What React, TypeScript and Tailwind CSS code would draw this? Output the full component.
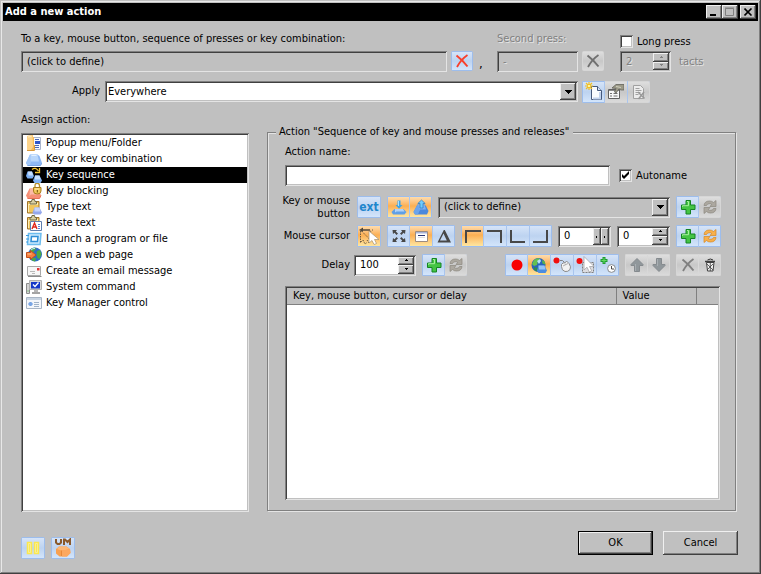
import { useState, type ReactNode } from 'react';
import clsx from 'clsx';

const sunken =
  'shadow-[inset_1px_1px_0_#808080,inset_-1px_-1px_0_#e4e4e4,inset_2px_2px_0_#404040,inset_-2px_-2px_0_#c0c0c0]';
const raised =
  'bg-[#c0c0c0] shadow-[inset_-1px_-1px_0_#404040,inset_1px_1px_0_#f0f0f0,inset_-2px_-2px_0_#808080]';
const etched = 'text-[#808080] [text-shadow:1px_1px_0_#e4e4e4]';

function Icon({ children }: { children: ReactNode }) {
  return (
    <svg width="16" height="16" viewBox="0 0 16 16" fill="none" className="block shrink-0" aria-hidden="true">
      {children}
    </svg>
  );
}

/* ---------- list icons ---------- */

const FolderIcon = () => (
  <Icon>
    <path d="M6.500 2.500h8v12h-8z" fill="#f4f8ff" stroke="#a8b4cc" />
    <path d="M9 4.500h4M9 10.500h4M9 12.500h4" stroke="#4a68b8" />
    <path d="M9 6h5v3H9z" fill="#2f55c8" />
    <path d="M1 1 7 0v2h1v13H1z" fill="#f6b955" />
    <path d="M1 1 6.500 0 7 12l-2 3H1z" fill="#fdd48a" />
    <path d="M2 2l3.500-.5" stroke="#fff0c8" />
    <path d="M8.500 10v5.500H1" stroke="#d8983a" />
  </Icon>
);
const KeyCapIcon = () => (
  <Icon>
    <path d="M4 3.500h7.500l2 1.500L16 12l-1.500 2.500H1.500L0 12z" fill="#8fb9f4" />
    <path d="M4.500 3.500h7l1.500 7H5L3.500 12z" fill="#b9d7fb" />
    <path d="M4 3.500 0 12l1.500 2.500H4l1-4z" fill="#a3c8f8" />
    <path d="M5.500 4.500h5" stroke="#e4f1ff" />
    <path d="M1.500 14.500h13L16 12" stroke="#79a5e6" />
  </Icon>
);
const SequenceIcon = () => (
  <Icon>
    <path d="M1.500 4.500H6L8 9l-1.500 2.500h-5L0 9z" fill="#7fb2f6" />
    <path d="M2 4.500h4l1 4H2.500z" fill="#c6dfff" />
    <path d="M9 8.500h4.500l2.500 5-1.500 2.500h-6L7 13.500z" fill="#7fb2f4" />
    <path d="M9 8.500h4.500l1 4H9z" fill="#c6dfff" />
    <path d="M6 2.500Q9.500-.5 12.500 4" stroke="#f4c430" strokeWidth="1.300" />
    <path d="M13.500 1v4.500H9" stroke="#f4c430" strokeWidth="1.300" />
  </Icon>
);
const BlockIcon = () => (
  <Icon>
    <path d="M3.500 5.500H11l2 2 2 5-1.500 3h-12L0 12.500z" fill="#f58f76" />
    <path d="M4 5.500h7l1 6H5L3.500 13z" fill="#fbb9a8" />
    <path d="M1.500 15.500h12l1.500-3" stroke="#e87058" />
    <path d="M9 5V2.500a2 2 0 0 1 4.500 0V5" stroke="#b8902c" strokeWidth="1.300" />
    <path d="M7.500 4.500h7.500V8q0 3-3.800 3-3.700 0-3.700-3z" fill="#f2c95c" stroke="#a87c1c" />
    <path d="M9 6h4" stroke="#fff0b8" />
    <path d="M11.300 7v2.500" stroke="#6b4a0c" />
  </Icon>
);
const Clipboard = () => (
  <>
    <path d="M1.500 2.500h11.500v11.500H1.500z" fill="#f2c65c" stroke="#a0742a" />
    <path d="M3 4h9v2H3z" fill="#fdeeb4" />
    <path d="M4 5V2.500h1.500L6 .5h2.500l.5 2h1.500V5z" fill="#d8d0a4" stroke="#706844" />
    <path d="M2.500 5v8" stroke="#fdeeb4" />
  </>
);
const TypeTextIcon = () => (
  <Icon>
    <Clipboard />
    <path d="M8.500 8.500h5l2.500 5-1.500 2H8l-1.500-2z" fill="#94a8ec" />
    <path d="M8.500 8.500h5l1 4h-6z" fill="#c6d3fb" />
  </Icon>
);
const PasteTextIcon = () => (
  <Icon>
    <Clipboard />
    <path d="M4.500 6.500h11v9h-11z" fill="#fff" stroke="#5f7fae" />
    <path d="m6 14 2.500-6 2.500 6M7 12h3" stroke="#e0281c" strokeWidth="1.400" />
    <path d="M12 9.500h2M12 11.500h2M12 13.500h2" stroke="#5a82d8" />
  </Icon>
);
const LaunchIcon = () => (
  <Icon>
    <path d="M2.500 2.500H15l-1 11H1.500z" fill="#cdeafc" stroke="#6cbcee" strokeWidth="1.500" />
    <path d="M5.500 5.500H12l-.5 5H5z" fill="#fff" stroke="#2f8fd6" strokeWidth="1.500" />
    <path d="M0 4.500h3M0 8h3M0 11h2" stroke="#3c9ce0" />
  </Icon>
);
const WebIcon = () => (
  <Icon>
    <circle cx="9" cy="7.500" r="7" fill="#2f6ec4" />
    <path d="M5 2c3-2 5-1 5 0L8 4 7 6 4 5zM11 4l3-1 1.500 4-2 5-2-1-1-4zM6 11l4 0-1 3.500-3-1z" fill="#4caa44" />
    <path d="M5 3q2-2 4-1.500" stroke="#bfe0ff" />
    <path d="M.5 5.500h4V3.500L10 8l-5.500 4.500v-2h-4z" fill="#f8803c" stroke="#c0501c" />
    <path d="M1.500 7h4" stroke="#ffc490" />
  </Icon>
);
const MailIcon = () => (
  <Icon>
    <path d="M1.500 3.500h13v9h-13z" fill="#f6f6f6" stroke="#a8a8a8" />
    <path d="M2 13.500h13.500" stroke="#8a8a8a" />
    <path d="M4 8.500h5M6 10.500h3" stroke="#b8b8b8" />
    <path d="M11 5h2.500v2.500H11z" fill="#e03434" />
  </Icon>
);
const SystemIcon = () => (
  <Icon>
    <path d="M.5 4.500h3v10h-3z" fill="#d4d4d4" stroke="#8c8c8c" />
    <path d="M1.500 12h1" stroke="#3cb03c" />
    <path d="M3.500 1.500h12v9h-12z" fill="#d8d8d8" stroke="#b0b0b0" />
    <path d="M5 3h9v6.500H5z" fill="#1438c8" />
    <path d="m7 5.500 2 2 3.500-4" stroke="#fff" strokeWidth="1.400" />
    <path d="M8 11h4v2H8z" fill="#b8b8b8" />
    <path d="M6 14h8" stroke="#a4a4a4" strokeWidth="2" />
  </Icon>
);
const ManagerIcon = () => (
  <Icon>
    <path d="M.5 2.500h15v11H.5z" fill="#f3f6fa" stroke="#a9b6c6" />
    <path d="M1 3h14v2H1z" fill="#c8d4e2" />
    <circle cx="4.500" cy="9" r="2" fill="#6a9be0" />
    <path d="M2 9h5" stroke="#88b0ec" />
    <path d="M8 7.500h5M8 9.500h5M8 11.500h5" stroke="#9fb2c8" />
  </Icon>
);

/* ---------- toolbar icons ---------- */

const CrossIcon = ({ color }: { color: string }) => (
  <Icon>
    <path d="M2.500 2.500q6 4.500 11 11" stroke={color} strokeWidth="2" />
    <path d="M13.500 2Q7 6.500 3 14" stroke={color} strokeWidth="1.800" />
  </Icon>
);
const NewPageIcon = () => (
  <svg width="18" height="20" viewBox="0 0 18 20" fill="none" className="block" aria-hidden="true">
    <path d="M6.500 4.500h6l4 4v9h-10z" fill="#f8fbff" stroke="#44587c" />
    <path d="M12.500 4.500v4h4" fill="#d4e2f6" stroke="#44587c" />
    <path d="M15 10v6.500H8" stroke="#c0d2ee" strokeWidth="2" />
    <path d="M4 0v8M0 4h8M1 1l6 6M7 1 1 7" stroke="#f4c020" strokeWidth="1.200" />
    <path d="M3 3h2v2H3z" fill="#fff6a0" />
  </svg>
);
const PropertiesIcon = () => (
  <Icon>
    <path d="M.5 5.500h11v9H.5z" fill="#f8f8f8" stroke="#606060" />
    <path d="M1 6.500h10" stroke="#8a8a8a" />
    <path d="M2 9.500h2M2 12h2M5.500 9.500h4M5.500 12h4" stroke="#707070" />
    <path d="m4 4 4-3.500h8V6h-3l-2-1-3 4-1.500-1 1.500-3.500z" fill="#9c9a88" stroke="#62625a" strokeWidth=".8" />
    <path d="m8 2.500 5 1" stroke="#d0d0c0" />
  </Icon>
);
const DeletePageIcon = () => (
  <Icon>
    <path d="M2.500 1.500h7l3 3v10h-10z" fill="#ececec" stroke="#a0a0a0" />
    <path d="M4.500 4.500h4M4.500 6.500h6M4.500 8.500h5M4.500 10.500h3" stroke="#a0a0a0" />
    <path d="m7 8 6.500 6.500M13 8l-5.500 7" stroke="#989898" strokeWidth="1.500" />
  </Icon>
);
const KeyDownIcon = () => (
  <Icon>
    <path d="M3.500 10h9l3 3-2 2.500H2L.5 13z" fill="#5f9fe6" />
    <path d="M4 10h8l1.500 2.500h-8L4 13.500z" fill="#b0d2f6" />
    <path d="M6.500 1.500h3V6h2L8 9.800 4.500 6h2z" fill="#3ca4e8" />
    <path d="M7.500 2v5" stroke="#a8e0ff" />
  </Icon>
);
const KeyUpIcon = () => (
  <Icon>
    <path d="M4.500 5.500h7L13 7l2.500 5-1.500 3.500H2L.5 13z" fill="#4a88dc" />
    <path d="M5 5.500h6.500l1.500 5H7L5.500 13z" fill="#7fb0f0" />
    <path d="m4.500 5.500-4 7.500L2 15.500h3l2-5z" fill="#6ba4ec" />
    <path d="M7 9V4.500H4.800L8.500 1l3.700 3.500H10V9z" fill="#70ccfc" stroke="#2878c0" strokeWidth=".7" />
  </Icon>
);
const PathCursorIcon = () => (
  <svg width="22" height="20" viewBox="0 0 22 20" fill="none" className="block" aria-hidden="true">
    <path d="m1 4 4-2.500v1.700h7v1.600H5V6z" fill="#50483c" />
    <path d="M2.500 5v11.500L5 14l2 4 2-1.500" stroke="#6b5a40" strokeDasharray="1.500 1" />
    <path d="m3.500 5 8 8M9 14l2 3" stroke="#6b5a40" strokeDasharray="1.500 1" />
    <path d="M12 5l2 1M14 4h1" stroke="#6b5a40" strokeDasharray="1 1" />
    <path d="M11 5v12l3-2.500 2 4 2.500-1-2-4H21z" fill="#fff" stroke="#a89474" strokeWidth=".7" />
  </svg>
);
const ExpandIcon = () => (
  <Icon>
    <path
      d="M1.500 2H6L4.800 3.500 7 5.500 5.500 7l-2-2.200L2 6zM14.500 2H10l1.200 1.500L9 5.500 10.500 7l2-2.200L14 6zM1.500 14H6l-1.200-1.500L7 10.500 5.500 9l-2 2.200L2 10zM14.500 14H10l1.200-1.500-2.200-2L10.500 9l2 2.200L14 10z"
      fill="#484848"
    />
  </Icon>
);
const WindowIcon = () => (
  <Icon>
    <path d="M2.500 3.500h12v10h-12z" fill="#fff" stroke="#9c8c80" />
    <path d="M3 4h11v1.500H3z" fill="#a8b4d8" />
    <path d="M5 7.500h7" stroke="#283878" />
    <path d="M5 9.500h7" stroke="#e0e0e0" />
  </Icon>
);
const TriangleIcon = () => (
  <Icon>
    <path d="M7.800 2h1L15 14.500H1.500zM7.500 5.500 4 12.500h6.800z" fill="#484848" fillRule="evenodd" />
  </Icon>
);
const CornerIcon = ({ d }: { d: string }) => (
  <svg width="20" height="18" viewBox="0 0 20 18" fill="none" className="block" aria-hidden="true">
    <path d={d} stroke="#484848" strokeWidth="2" />
  </svg>
);
const PlusIcon = () => (
  <Icon>
    <path d="M6 1.500h4.500V6H15v4.500h-4.500V15H6v-4.500H1.500V6H6z" fill="#44c444" stroke="#148424" />
    <path d="M7 2.500h1.500v4.200H2.500v1" stroke="#a8f0a0" />
  </Icon>
);
const RefreshIcon = ({ color, edge }: { color: string; edge: string }) => (
  <Icon>
    <g stroke={edge} strokeWidth=".7" fill={color}>
      <path d="M2 6.500Q2.500 2 7.500 2q2.500 0 4 1.500L14 1.500V7.500H8L9.700 5.300Q8.500 4.500 7 4.700 5 5 4.500 6.500z" />
      <path d="M14 9.500Q13.500 14 8.500 14q-2.500 0-4-1.500L2 14.500V8.500h6l-1.700 2.200q1.200.8 2.700.6 2-.3 2.500-1.800z" />
    </g>
  </Icon>
);
const RecordIcon = () => (
  <Icon>
    <circle cx="8" cy="8" r="5.500" fill="#f80000" />
  </Icon>
);
const GlobeKeyIcon = () => (
  <Icon>
    <circle cx="7.500" cy="8" r="7" fill="#2a64b8" />
    <path d="M3 3q3-2.500 6-1.500L7 4 6 8 3 9 1 7z" fill="#64c050" />
    <path d="M11 3l2.500 1.500 1 3-3-1z" fill="#58b848" />
    <path d="M3 10l4 1-1 3.500-3-1.500z" fill="#2c8c50" />
    <path d="M6 4l3-2 1 2-2 3z" fill="#b8e4fa" />
    <path d="M7.500 8.500h6l2.500 5-1.500 2.500h-7L6 13.500z" fill="#4a8ce0" />
    <path d="M7.500 8.500h6l1 4H8z" fill="#94c4f8" />
  </Icon>
);
const RecordMouseIcon = () => (
  <svg width="20" height="18" viewBox="0 0 20 18" fill="none" className="block" aria-hidden="true">
    <circle cx="4.500" cy="4.500" r="3" fill="#f01010" />
    <path d="M8 4.500h2.500l2 2" stroke="#808080" />
    <path d="M9.500 8.500q1-2 4-2l1-1.500 2.500 2.500q2.500 3.500 1 6-2 2.500-5 2-3.500-1-3.500-5z" fill="#f2f2f2" stroke="#8c8c8c" />
    <path d="m11 10 5-2.500M13 7.500l.5 1.500" stroke="#b0b0b0" />
  </svg>
);
const RecordCursorIcon = () => (
  <svg width="20" height="20" viewBox="0 0 20 20" fill="none" className="block" aria-hidden="true">
    <circle cx="4.500" cy="6" r="3" fill="#f01010" />
    <path d="M7.500 7.500h11v10h-11z" fill="#dcdce0" stroke="#808080" strokeDasharray="2 1" />
    <path d="M9 1.500v13.500l3-2.800 2.300 4.800 2.400-1.200L14.500 11.500H19z" fill="#fff" stroke="#a4a4a8" strokeWidth=".8" />
  </svg>
);
const PlusClockIcon = () => (
  <Icon>
    <path d="M4 0v7M.5 3.500h7" stroke="#209c34" strokeWidth="3" />
    <path d="M4 1v5M1.500 3.500h5" stroke="#64dc60" />
    <circle cx="11.500" cy="11.500" r="3.900" fill="#fff" stroke="#84888c" />
    <path d="M11.500 9v3h2.500" stroke="#484848" />
  </Icon>
);
const ArrowIcon = ({ down = false }: { down?: boolean }) => (
  <Icon>
    <path
      d={down ? 'M5.500 1.500h5v6h3.500v1l-6 6-6-6v-1h3.500z' : 'M5.500 14.500h5v-6h3.500v-1l-6-6-6 6v1h3.500z'}
      fill="#90979b"
      stroke="#858a8e"
    />
    <path d={down ? 'M6.500 2v7' : 'M6.500 14V7'} stroke="#a8aeb2" />
  </Icon>
);
const TrashIcon = () => (
  <Icon>
    <path d="M5.500 3q3-2 5.500 0" stroke="#303030" />
    <path d="M3 4.500h10" stroke="#404040" strokeWidth="1.600" />
    <path d="M4.500 5.500h7.500L11 14H5.500z" fill="#f0f0f0" stroke="#404040" />
    <path d="m5 7 6 6M11 7l-6 6M8.300 6v8" stroke="#404040" strokeWidth=".8" />
  </Icon>
);
const PauseIcon = () => (
  <Icon>
    <path d="M2.500 2.500h4v11h-4zM9.500 2.500h4v11h-4z" fill="#f8f0a8" stroke="#fbe850" strokeWidth="1.500" />
    <path d="M4.500 4v8M11.500 4v8" stroke="#fbe850" />
  </Icon>
);
const UserModeIcon = () => (
  <svg width="18" height="20" viewBox="0 0 18 20" fill="none" className="block" aria-hidden="true">
    <path d="M2 1v3.500L3.500 6h2L7 4.500V1M10 7V1.500h1L13.500 4 16 1.500V7" stroke="#8a5a2c" strokeWidth="2" />
    <path d="M5 8.500h7.500L16 11l.5 4-3.500 3.500H5.500L2 15.500V11z" fill="#f8a050" />
    <path d="M5 8.500h7.500l3 2.500-4 1-4 .5L3 11z" fill="#fcb878" />
    <path d="M7.500 12.500V18" stroke="#e88838" />
    <path d="M8 12.500 16 11l.5 4-3.500 3.500H8z" fill="#fca860" />
  </svg>
);

/* ---------- controls ---------- */

type Tone = 'blue' | 'orange' | 'gray';
const tones: Record<Tone, string> = {
  blue: 'border-[#9dbdec] bg-linear-to-b from-[#d6e4f8] via-[#bdd3f0] via-50% to-[#d3e5fb]',
  orange: 'border-[#9dbdec] bg-linear-to-b from-[#fddcae] via-[#fbaf52] via-45% to-[#fee6a0]',
  gray: 'border-[#d6d6d6] bg-linear-to-b from-[#dedede] via-[#c8c8c8] via-50% to-[#dadada]',
};

type Tool = { label: string; tone?: Tone; icon: ReactNode };

function ToolGroup({
  tools,
  wide = false,
  short = false,
  className,
}: {
  tools: Tool[];
  wide?: boolean;
  short?: boolean;
  className?: string;
}) {
  return (
    <div
      className={clsx(
        'flex shrink-0 gap-px overflow-hidden rounded-[2px]',
        short ? 'h-5' : 'h-[22px]',
        tools.some((t) => t.tone !== 'gray') ? 'bg-[#a9c5ee]' : 'bg-[#d8d8d8]',
        className,
      )}
    >
      {tools.map((t) => (
        <button
          key={t.label}
          type="button"
          aria-label={t.label}
          disabled={t.tone === 'gray'}
          className={clsx(
            'flex h-full items-center justify-center border-y first:border-l last:border-r',
            wide ? 'w-6' : 'w-[22px]',
            tones[t.tone ?? 'blue'],
          )}
        >
          {t.icon}
        </button>
      ))}
    </div>
  );
}

function Spinner({
  label,
  value,
  disabled = false,
  horizontal = false,
  className,
}: {
  label: string;
  value: string;
  disabled?: boolean;
  horizontal?: boolean;
  className?: string;
}) {
  const [text, setText] = useState(value);
  const mark = disabled ? 'text-[#808080]' : 'text-black';
  return (
    <div className={clsx('flex h-[21px] shrink-0 p-0.5', sunken, disabled ? 'bg-[#c0c0c0]' : 'bg-white', className)}>
      <input
        aria-label={label}
        value={text}
        disabled={disabled}
        onChange={(e) => setText(e.target.value)}
        className={clsx('w-0 min-w-0 flex-1 bg-transparent pl-1 leading-3 outline-none', disabled ? etched : 'text-black')}
      />
      <div className={clsx('flex w-4 shrink-0', !horizontal && 'flex-col')}>
        {[true, false].map((first) => (
          <button
            key={String(first)}
            type="button"
            disabled={disabled}
            aria-label={`${label} ${first === horizontal ? 'decrease' : 'increase'}`}
            className={clsx('flex min-h-0 flex-1 items-center justify-center', raised, mark)}
          >
            {horizontal ? (
              <svg width="2" height="3" className="block" aria-hidden="true">
                <path d="M0 1h1v2H0z" fill="currentColor" />
              </svg>
            ) : (
              <svg width="5" height="3" viewBox="0 0 5 3" className="block" aria-hidden="true">
                <path d={first ? 'M2 0h1v1h1v1H1V1h1z' : 'M1 0h3v1H3v1H2V1H1z'} fill="currentColor" shapeRendering="crispEdges" />
              </svg>
            )}
          </button>
        ))}
      </div>
    </div>
  );
}

function DropDown({ id, options, gray = false, className }: { id: string; options: string[]; gray?: boolean; className?: string }) {
  return (
    <div className={clsx('relative h-[21px] min-w-0 flex-1', className)}>
      <select
        id={id}
        className={clsx('h-full w-full appearance-none pr-5 leading-3 outline-none', sunken, gray ? 'bg-[#c0c0c0] pl-1.5' : 'bg-white pl-[3px]')}
      >
        {options.map((o) => (
          <option key={o}>{o}</option>
        ))}
      </select>
      <span className={clsx('pointer-events-none absolute inset-y-0.5 right-0.5 flex w-4 items-center justify-center', raised)}>
        <svg width="7" height="4" viewBox="0 0 7 4" className="block" aria-hidden="true">
          <path d="M0 0h7v1H6v1H5v1H4v1H3V3H2V2H1V1H0z" shapeRendering="crispEdges" />
        </svg>
      </span>
    </div>
  );
}

function CheckBox({ label, defaultChecked = false }: { label: string; defaultChecked?: boolean }) {
  return (
    <label className="flex items-center gap-1">
      <span className="grid size-[13px]">
        <input
          type="checkbox"
          defaultChecked={defaultChecked}
          className={clsx('peer size-[13px] appearance-none bg-white [grid-area:1/1]', sunken)}
        />
        <svg width="13" height="13" className="invisible [grid-area:1/1] peer-checked:visible" aria-hidden="true">
          <path d="M3 5v3l2 2 5-5V2L5 7z" />
        </svg>
      </span>
      {label}
    </label>
  );
}

/* ---------- content ---------- */

const actions: [string, () => ReactNode][] = [
  ['Popup menu/Folder', FolderIcon],
  ['Key or key combination', KeyCapIcon],
  ['Key sequence', SequenceIcon],
  ['Key blocking', BlockIcon],
  ['Type text', TypeTextIcon],
  ['Paste text', PasteTextIcon],
  ['Launch a program or file', LaunchIcon],
  ['Open a web page', WebIcon],
  ['Create an email message', MailIcon],
  ['System command', SystemIcon],
  ['Key Manager control', ManagerIcon],
];

const grayRefresh = <RefreshIcon color="#aca8a0" edge="#8c8880" />;

function TitleBar() {
  return (
    <header className="flex h-[18px] shrink-0 items-center bg-black px-0.5 text-white">
      <h1 className="flex-1 font-bold">Add a new action</h1>
      <div className="flex text-black">
        <button type="button" aria-label="Minimize" className={clsx('flex h-3.5 w-4 items-center justify-center', raised)}>
          <svg width="8" height="8" aria-hidden="true">
            <path d="M0 6h6v2H0z" />
          </svg>
        </button>
        <button type="button" aria-label="Maximize" disabled className={clsx('mr-0.5 flex h-3.5 w-4 items-center justify-center', raised)}>
          <svg width="10" height="10" fill="none" stroke="#808080" aria-hidden="true">
            <path d="M.5 1.500h8v7h-8zM0 1h9" />
          </svg>
        </button>
        <button type="button" aria-label="Close" className={clsx('flex h-3.5 w-4 items-center justify-center', raised)}>
          <svg width="9" height="8" stroke="#000" strokeWidth="1.600" aria-hidden="true">
            <path d="m.5.500 7 7M7.500.500l-7 7" />
          </svg>
        </button>
      </div>
    </header>
  );
}

export default function App() {
  const [selected, setSelected] = useState(2);
  return (
    <div className="flex min-h-screen w-full flex-col bg-[#c0c0c0] p-[3px] font-['DejaVu_Sans_Condensed','DejaVu_Sans',sans-serif] text-[11px] leading-3 text-black shadow-[inset_-1px_-1px_0_#404040,inset_1px_1px_0_#c0c0c0,inset_-2px_-2px_0_#808080,inset_2px_2px_0_#e8e8e8]">
      <TitleBar />

      <main className="flex flex-1 flex-col pt-3 pr-5 pb-4 pl-[18px]">
        <div className="flex">
          <div className="min-w-0 flex-1">
            <div className="h-[18px] whitespace-nowrap">
              <label htmlFor="trigger">To a key, mouse button, sequence of presses or key combination:</label>
            </div>
            <div className="flex">
              <input
                id="trigger"
                readOnly
                value="(click to define)"
                className={clsx('h-[21px] min-w-0 flex-1 bg-[#c0c0c0] px-1.5 outline-none', sunken)}
              />
              <ToolGroup short className="ml-1" tools={[{ label: 'Clear', icon: <CrossIcon color="#f8402c" /> }]} />
              <span className="w-6 self-center pt-1 pl-1.5 text-[13px]">,</span>
            </div>
          </div>
          <div className="w-[107px] shrink-0">
            <div className={clsx('h-[18px]', etched)}>
              <label htmlFor="second">Second press:</label>
            </div>
            <div className="flex gap-1">
              <input
                id="second"
                disabled
                value="-"
                className={clsx('h-[21px] w-0 min-w-0 flex-1 bg-[#c0c0c0] px-1.5', sunken, etched)}
              />
              <ToolGroup short tools={[{ label: 'Clear second press', tone: 'gray', icon: <CrossIcon color="#707070" /> }]} />
            </div>
          </div>
          <div className="ml-4 w-[118px] shrink-0">
            <div className="h-[18px] pt-0.5">
              <CheckBox label="Long press" />
            </div>
            <div className="flex items-center gap-2">
              <Spinner label="tacts" value="2" disabled className="w-[51px]" />
              <span className={etched}>tacts</span>
            </div>
          </div>
        </div>

        <div className="mt-[9px] flex items-start pr-[88px]">
          <label htmlFor="apply" className="mr-[5px] w-[79px] pt-1 text-right">
            Apply
          </label>
          <DropDown id="apply" options={['Everywhere']} className="mr-1" />
          <ToolGroup
            tools={[
              { label: 'New', icon: <NewPageIcon /> },
              { label: 'Properties', tone: 'gray', icon: <PropertiesIcon /> },
              { label: 'Delete', tone: 'gray', icon: <DeletePageIcon /> },
            ]}
          />
        </div>

        <div className="mt-[11px] flex flex-1 gap-[18px]">
          <section className="flex w-[228px] shrink-0 flex-col">
            <h2 className="mb-[7px]">Assign action:</h2>
            <div role="listbox" aria-label="Assign action" className={clsx('flex-1 bg-white p-0.5', sunken)}>
              {actions.map(([name, ActionIcon], i) => (
                <button
                  key={name}
                  type="button"
                  role="option"
                  aria-selected={i === selected}
                  onClick={() => setSelected(i)}
                  className={clsx('flex h-4 w-full items-center gap-1 pl-[3px]', i === selected && 'bg-black text-white')}
                >
                  <ActionIcon />
                  {name}
                </button>
              ))}
            </div>
          </section>

          <section className="flex min-w-0 flex-1 flex-col pt-3 pr-[2px] pb-px">
            <fieldset className="flex min-w-0 flex-1 flex-col border border-[#808080] pr-[14px] pb-2.5 pl-[17px] shadow-[inset_1px_1px_0_#e4e4e4,1px_1px_0_#e4e4e4]">
              <legend className="-ml-[9px] bg-[#c0c0c0] pr-1 pl-[3px]">
                Action "Sequence of key and mouse presses and releases"
              </legend>

              <div className="mt-2 mb-[7px]">
                <label htmlFor="action-name">Action name:</label>
              </div>
              <div className="flex items-center">
                <input id="action-name" className={clsx('h-[21px] w-0 min-w-0 flex-1 bg-white px-1 outline-none', sunken)} />
                <div className="ml-[9px] w-[102px]">
                  <CheckBox label="Autoname" defaultChecked />
                </div>
              </div>

              <div className="mt-2.5 flex h-[22px] items-center gap-1.5">
                <label htmlFor="key" className="mr-px flex w-[65px] justify-end text-right leading-[13px] whitespace-nowrap">
                  <span>
                    Key or mouse
                    <br />
                    button
                  </span>
                </label>
                <ToolGroup
                  wide
                  tools={[{ label: 'Extended', icon: <span className="text-xs leading-3 font-bold text-[#1f86cc]">ext</span> }]}
                />
                <ToolGroup
                  tools={[
                    { label: 'Press', tone: 'orange', icon: <KeyDownIcon /> },
                    { label: 'Release', tone: 'orange', icon: <KeyUpIcon /> },
                  ]}
                />
                <DropDown id="key" gray options={['(click to define)']} />
                <ToolGroup
                  tools={[
                    { label: 'Add key', icon: <PlusIcon /> },
                    { label: 'Replace key', tone: 'gray', icon: grayRefresh },
                  ]}
                />
              </div>

              <div className="mt-[7px] flex h-[22px] items-center gap-1.5">
                <span className="mr-px flex w-[65px] justify-end whitespace-nowrap">Mouse cursor</span>
                <ToolGroup wide tools={[{ label: 'Move cursor', tone: 'orange', icon: <PathCursorIcon /> }]} />
                <ToolGroup
                  tools={[
                    { label: 'Screen', icon: <ExpandIcon /> },
                    { label: 'Window', tone: 'orange', icon: <WindowIcon /> },
                    { label: 'Offset', icon: <TriangleIcon /> },
                  ]}
                />
                <ToolGroup
                  tools={[
                    { label: 'Top left', tone: 'orange', icon: <CornerIcon d="M3 16V4h15" /> },
                    { label: 'Top right', icon: <CornerIcon d="M2 4h14v12" /> },
                    { label: 'Bottom left', icon: <CornerIcon d="M3 3v12h14" /> },
                    { label: 'Bottom right', icon: <CornerIcon d="M2 15h14V3" /> },
                  ]}
                />
                <Spinner label="X" value="0" horizontal className="w-[53px]" />
                <Spinner label="Y" value="0" className="w-[53px]" />
                <ToolGroup
                  className="ml-auto"
                  tools={[
                    { label: 'Add cursor', icon: <PlusIcon /> },
                    { label: 'Replace cursor', icon: <RefreshIcon color="#f8b04c" edge="#d88820" /> },
                  ]}
                />
              </div>

              <div className="mt-[7px] flex h-[22px] items-center gap-1.5">
                <div className="flex items-center gap-1">
                  <span className="w-[65px] text-right">Delay</span>
                  <Spinner label="Delay" value="100" className="w-[62px]" />
                </div>
                <ToolGroup
                  tools={[
                    { label: 'Add delay', icon: <PlusIcon /> },
                    { label: 'Replace delay', tone: 'gray', icon: grayRefresh },
                  ]}
                />
                <ToolGroup
                  className="ml-auto"
                  tools={[
                    { label: 'Record', icon: <RecordIcon /> },
                    { label: 'Record keys', tone: 'orange', icon: <GlobeKeyIcon /> },
                    { label: 'Record mouse', icon: <RecordMouseIcon /> },
                    { label: 'Record cursor', icon: <RecordCursorIcon /> },
                    { label: 'Record delays', icon: <PlusClockIcon /> },
                  ]}
                />
                <ToolGroup
                  tools={[
                    { label: 'Move up', tone: 'gray', icon: <ArrowIcon /> },
                    { label: 'Move down', tone: 'gray', icon: <ArrowIcon down /> },
                  ]}
                />
                <ToolGroup
                  tools={[
                    { label: 'Remove', tone: 'gray', icon: <CrossIcon color="#808080" /> },
                    { label: 'Remove all', tone: 'gray', icon: <TrashIcon /> },
                  ]}
                />
              </div>

              <div className={clsx('mt-2.5 mr-px flex-1 bg-white p-0.5', sunken)}>
                <table className="w-full table-fixed border-collapse text-left">
                  <thead>
                    <tr className="h-4 bg-[#c0c0c0] *:border-b *:border-[#808080] *:p-0 *:pl-1.5 *:font-normal">
                      <th className="border-r">Key, mouse button, cursor or delay</th>
                      <th className="w-20 border-r">Value</th>
                      <td className="w-[22px]" />
                    </tr>
                  </thead>
                </table>
              </div>
            </fieldset>
          </section>
        </div>

        <footer className="mt-[19px] flex h-6 items-start justify-between">
          <div className="flex gap-1.5 pt-1.5">
            <ToolGroup wide tools={[{ label: 'Pause', icon: <PauseIcon /> }]} />
            <ToolGroup wide tools={[{ label: 'User mode', icon: <UserModeIcon /> }]} />
          </div>
          <div className="flex gap-2.5">
            <button
              type="button"
              className="h-6 w-[75px] border border-black bg-[#c0c0c0] shadow-[inset_-1px_-1px_0_#404040,inset_1px_1px_0_#f0f0f0,inset_-2px_-2px_0_#808080]"
            >
              OK
            </button>
            <button type="button" className={clsx('h-6 w-[75px]', raised)}>
              Cancel
            </button>
          </div>
        </footer>
      </main>
    </div>
  );
}
